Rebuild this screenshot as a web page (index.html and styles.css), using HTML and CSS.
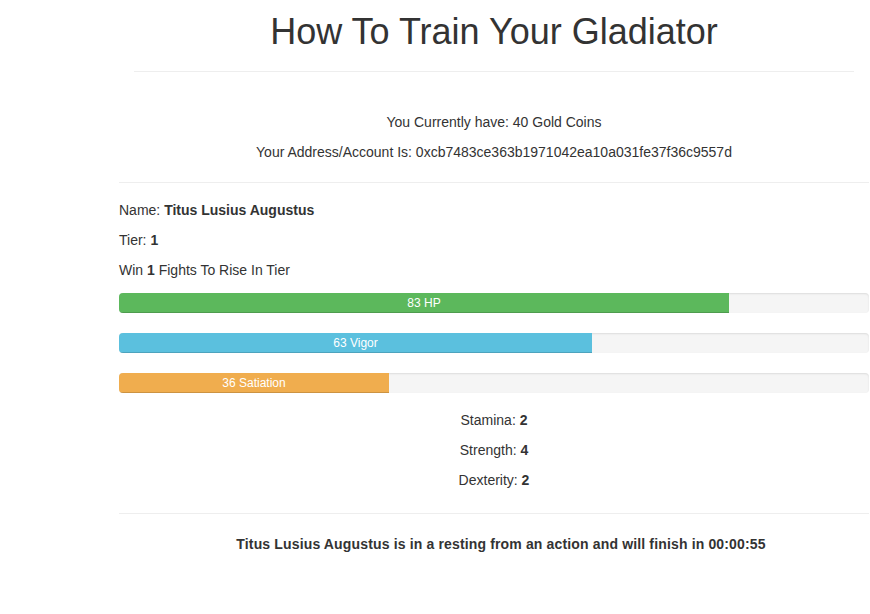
FILE: index.html
```html
<!DOCTYPE html>
<html>
<head>
<meta charset="utf-8">
<link rel="stylesheet" href="styles.css">
</head>
<body>
<div class="page">
  <div class="page-header">
    <h1>How To Train Your Gladiator</h1>
  </div>
  <div class="account">
    <p>You Currently have: 40 Gold Coins</p>
    <p>Your Address/Account Is: 0xcb7483ce363b1971042ea10a031fe37f36c9557d</p>
  </div>
  <hr class="rule rule-top">
  <div class="info">
    <p>Name: <b>Titus Lusius Augustus</b></p>
    <p>Tier: <b>1</b></p>
    <p>Win <b>1</b> Fights To Rise In Tier</p>
  </div>
  <div class="bars">
    <div class="progress"><div class="bar bar-success" style="width: 81.33%">83 HP</div></div>
    <div class="progress"><div class="bar bar-info" style="width: 63.07%">63 Vigor</div></div>
    <div class="progress"><div class="bar bar-warning" style="width: 36%">36 Satiation</div></div>
  </div>
  <div class="stats">
    <p>Stamina: <b>2</b></p>
    <p>Strength: <b>4</b></p>
    <p>Dexterity: <b>2</b></p>
  </div>
  <hr class="rule rule-bottom">
  <p class="status">Titus Lusius Augustus is in a resting from an action and will finish in 00:00:55</p>
</div>
</body>
</html>
```
FILE: styles.css
```css
html, body {
  margin: 0;
  padding: 0;
  background: #fff;
}
body {
  font-family: "Liberation Sans", Arial, Helvetica, sans-serif;
  font-size: 14px;
  line-height: 20px;
  color: #333;
}
.page {
  margin-left: 119px;
  width: 750px;
}
.page-header {
  margin: 0 15px;
  padding-top: 12px;
  padding-bottom: 19px;
  border-bottom: 1px solid #eee;
}
.page-header h1 {
  margin: 0;
  font-size: 36px;
  line-height: 40px;
  font-weight: normal;
  text-align: center;
}
p {
  margin: 0;
}
.account {
  margin-top: 40px;
  display: flex;
  flex-direction: column;
  gap: 10px;
  text-align: center;
}
.rule {
  height: 0;
  border: 0;
  border-top: 1px solid #eee;
  margin: 0;
}
.rule-top {
  margin-top: 20px;
}
.info {
  margin-top: 17px;
  display: flex;
  flex-direction: column;
  gap: 10px;
}
.bars {
  margin-top: 13px;
  display: flex;
  flex-direction: column;
  gap: 20px;
}
.progress {
  height: 20px;
  background: #f5f5f5;
  border-radius: 4px;
  box-shadow: inset 0 1px 2px rgba(0, 0, 0, 0.1);
  overflow: hidden;
}
.bar {
  height: 100%;
  font-size: 12px;
  line-height: 20px;
  color: #fff;
  text-align: center;
  box-shadow: inset 0 -1px 0 rgba(0, 0, 0, 0.15);
}
.bar-success { background: #5cb85c; }
.bar-info { background: #5bc0de; }
.bar-warning { background: #f0ad4e; }
.stats {
  margin-top: 17px;
  display: flex;
  flex-direction: column;
  gap: 10px;
  text-align: center;
}
.rule-bottom {
  margin-top: 23px;
}
.status {
  margin-top: 20px;
  font-weight: bold;
  text-align: center;
  padding-left: 14px;
  letter-spacing: 0.15px;
}
```
